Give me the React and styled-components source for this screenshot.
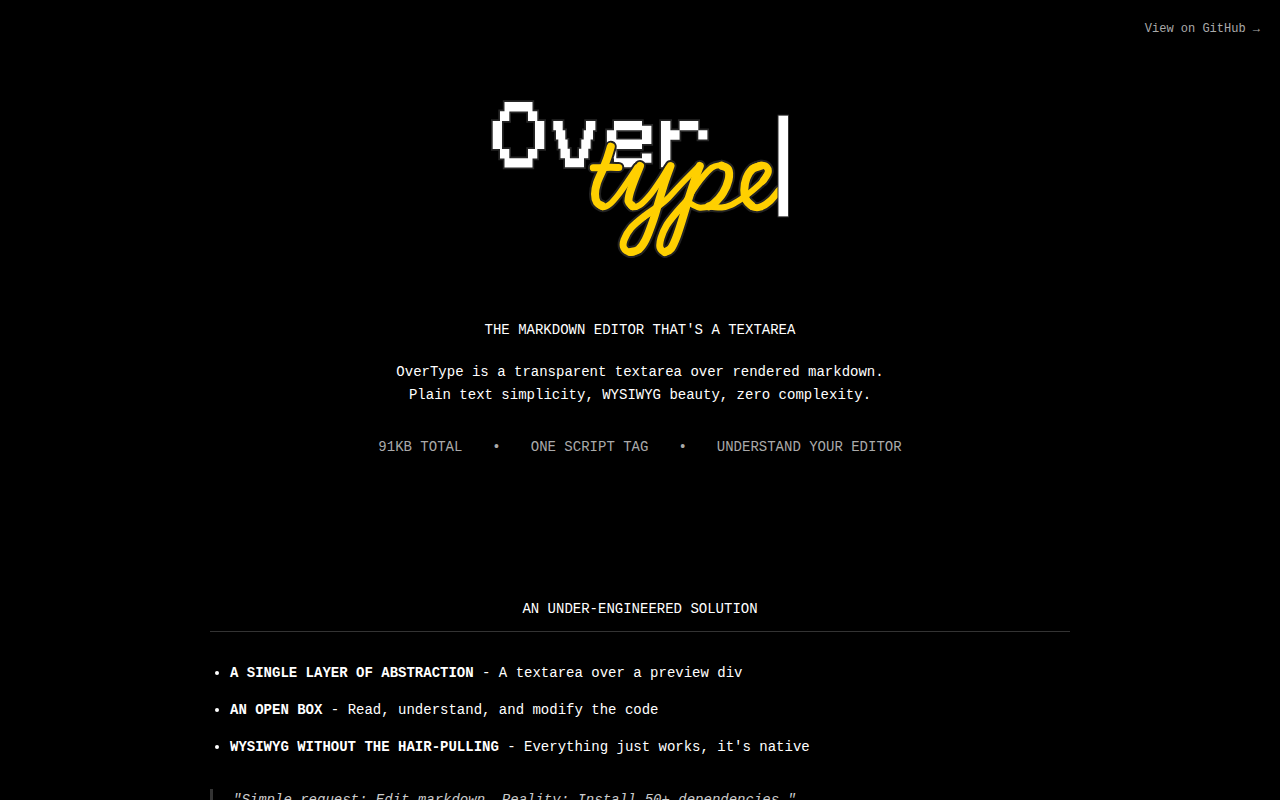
import React from 'react'
import styled, { createGlobalStyle } from 'styled-components'

const stats = ['91KB TOTAL', 'ONE SCRIPT TAG', 'UNDERSTAND YOUR EDITOR']

const features = [
  { id: 1, title: 'A SINGLE LAYER OF ABSTRACTION', text: 'A textarea over a preview div' },
  { id: 2, title: 'AN OPEN BOX', text: 'Read, understand, and modify the code' },
  { id: 3, title: 'WYSIWYG WITHOUT THE HAIR-PULLING', text: "Everything just works, it's native" },
]

// pixel blocks of the upper word: x, y, width, height
const blocks = [
  [504.5, 102, 28, 9.5], [500, 111.3, 9.3, 9.7], [528, 111.3, 9.3, 9.7],
  [492.7, 121, 9.3, 28], [535, 121, 9.3, 28],
  [500, 149, 9.3, 9.5], [528, 149, 9.3, 9.5], [504.5, 158.3, 28, 9.2],

  [553.3, 121, 9.4, 9.3], [586, 121, 9.4, 9.3],
  [556, 130.3, 9.3, 9.3], [583.7, 130.3, 9.3, 9.3],
  [558.3, 139.6, 9.3, 9.2], [581.3, 139.6, 9.3, 9.2],
  [560.5, 148.8, 9.4, 9.4], [579, 148.8, 9.3, 9.4],
  [565, 158.2, 19, 9.1],

  [614, 121, 28, 9.3], [642, 125.7, 9.4, 18.3], [606.9, 130.3, 9.4, 28],
  [614, 139.6, 28, 9.4], [614, 158.2, 28, 9.1], [642, 153.5, 9.4, 9.3],

  [661, 121, 9.4, 46.3], [670.4, 130.3, 9.2, 9.4],
  [679.6, 121, 18.7, 9.3], [698.3, 130.3, 9.1, 9.2],
]

// centre lines of the script word, heavy down strokes and lighter joins
const strokes = [
  { width: 8, points: [[610.8, 146.7], [607.3, 158], [603, 169], [597, 183], [595, 194], [597, 202.5], [602.5, 206]] },
  { width: 6, points: [[597, 203], [602.5, 207.2], [610, 204], [618.5, 194.5], [628, 181], [637, 167.5]] },
  { width: 7, points: [[593.3, 167.8], [606, 167.4], [618.8, 167.4]] },
  { width: 8, points: [[640, 166], [634.5, 179.5], [629.8, 193], [628.6, 201.5], [632.5, 206]] },
  { width: 6, points: [[629, 203], [632.5, 207.2], [640, 205], [650, 195], [660, 181], [668, 168]] },
  { width: 8, points: [[670.5, 166], [665, 181.3], [659, 201], [653.3, 220], [645.5, 240], [638.5, 249.5], [630.5, 252]] },
  { width: 7, points: [[638.5, 250], [630.5, 252.5], [623.8, 248], [624, 240], [631, 228], [644, 216.5], [656, 208]] },
  { width: 6, points: [[644, 217], [657, 207.5], [668.3, 198], [681.7, 183.5], [697, 168]] },
  { width: 8, points: [[699.8, 166], [695, 179], [688.8, 198], [683.3, 216.3], [676.7, 236.5], [671, 248.5], [665, 252]] },
  { width: 7, points: [[671, 248.5], [665, 252.3], [660, 247.5], [661, 238], [666.5, 225.5], [676, 213], [684, 204]] },
  { width: 6, points: [[684, 204], [691, 193.5], [700, 180.3], [711.7, 167.7], [721.7, 164.8]] },
  { width: 8, points: [[721.7, 165.7], [728.3, 169.5], [728.5, 180], [723, 193], [714, 203.5], [709, 206.3]] },
  { width: 6, points: [[689.5, 203], [699, 207.5], [710, 206.8], [721.7, 207.5], [731.7, 204.7], [742, 198.5], [752, 191], [763, 181], [768, 173]] },
  { width: 7, points: [[763, 181], [768, 173], [767, 167.3], [761, 165.2], [752.5, 168.5]] },
  { width: 8, points: [[761, 165.8], [752.5, 169], [746.5, 178], [744.3, 189.7], [746, 199.7], [752, 206]] },
  { width: 7, points: [[746, 199.7], [752, 206.3], [760, 207.2], [770, 201], [779, 190.5]] },
]

const smooth = (pts) => {
  let d = `M${pts[0][0]} ${pts[0][1]}`
  for (let i = 0; i < pts.length - 1; i++) {
    const a = pts[i - 1] || pts[i]
    const b = pts[i]
    const c = pts[i + 1]
    const e = pts[i + 2] || c
    d += `C${b[0] + (c[0] - a[0]) / 6} ${b[1] + (c[1] - a[1]) / 6} ${c[0] - (e[0] - b[0]) / 6} ${c[1] - (e[1] - b[1]) / 6} ${c[0]} ${c[1]}`
  }
  return d
}

const blockPath = blocks.map(([x, y, w, h]) => `M${x} ${y}h${w}v${h}h${-w}z`).join('')

function Script({ color, grow }) {
  return (
    <g fill="none" stroke={color} strokeLinecap="round" strokeLinejoin="round">
      {strokes.map((item, i) => (
        <path key={i} d={smooth(item.points)} strokeWidth={item.width + grow} />
      ))}
    </g>
  )
}

function Logo() {
  return (
    <LogoSvg viewBox="486 96 308 166" role="img" aria-label="OverType">
      <path d={blockPath} fill="#262626" stroke="#262626" strokeWidth="3.4" />
      <path d={blockPath} fill="#fff" />
      <Script color="#222" grow={4} />
      <Script color="#ffd000" grow={0} />
      <rect x="778.5" y="115.7" width="9.5" height="100.6" fill="#fff" stroke="#333" strokeWidth="2" paintOrder="stroke" />
    </LogoSvg>
  )
}

function App() {
  return (
    <>
      <GlobalStyle />
      <TopBar>
        <GithubLink href="#github">View on GitHub →</GithubLink>
      </TopBar>
      <Container>
        <Hero>
          <Logo />
          <Title>THE MARKDOWN EDITOR THAT'S A TEXTAREA</Title>
          <Intro>
            OverType is a transparent textarea over rendered markdown.<br />
            Plain text simplicity, WYSIWYG beauty, zero complexity.
          </Intro>
          <Stats>
            {stats.map((item, i) => (
              <React.Fragment key={item}>
                {i > 0 && <span>•</span>}
                <span>{item}</span>
              </React.Fragment>
            ))}
          </Stats>
        </Hero>
        <section>
          <SectionTitle>AN UNDER-ENGINEERED SOLUTION</SectionTitle>
          <FeatureList>
            {features.map((item) => (
              <li key={item.id}>
                <strong>{item.title}</strong> - {item.text}
              </li>
            ))}
          </FeatureList>
          <Quote>"Simple request: Edit markdown. Reality: Install 50+ dependencies."</Quote>
        </section>
      </Container>
    </>
  )
}

const GlobalStyle = createGlobalStyle`
  * {
    box-sizing: border-box;
    margin: 0;
    padding: 0;
  }
  body {
    background: #000;
    color: #fff;
    font-family: "Liberation Mono", "Courier New", monospace;
    font-size: 14px;
    line-height: 23px;
  }
`;

const TopBar = styled.header`
  display: flex;
  justify-content: flex-end;
  padding: 20px;
`;

const GithubLink = styled.a`
  color: #aaa;
  font-size: 12px;
  line-height: 19px;
  text-decoration: none;
  &:hover {
    color: #fff;
  }
`;

const Container = styled.main`
  max-width: 900px;
  margin: 0 auto;
  padding: 0 20px;
`;

const Hero = styled.div`
  display: flex;
  flex-direction: column;
  align-items: center;
  padding: 37px 0 139px;
  text-align: center;
`;

const LogoSvg = styled.svg`
  display: block;
  width: 308px;
  max-width: 100%;
  margin-bottom: 57px;
`;

const Title = styled.h1`
  margin-bottom: 19px;
  font-size: 14px;
  font-weight: normal;
`;

const Intro = styled.p`
  margin-bottom: 29px;
`;

const Stats = styled.div`
  display: flex;
  flex-wrap: wrap;
  justify-content: center;
  gap: 30px;
  color: #aaa;
`;

const SectionTitle = styled.h2`
  margin-bottom: 30px;
  padding-bottom: 10px;
  border-bottom: 1px solid #333;
  font-size: 14px;
  font-weight: normal;
  text-align: center;
`;

const FeatureList = styled.ul`
  display: flex;
  flex-direction: column;
  gap: 14px;
  margin-bottom: 30px;
  padding-left: 20px;
`;

const Quote = styled.blockquote`
  padding-left: 20px;
  border-left: 3px solid #333;
  color: #ccc;
  font-style: italic;
`;

export default App
